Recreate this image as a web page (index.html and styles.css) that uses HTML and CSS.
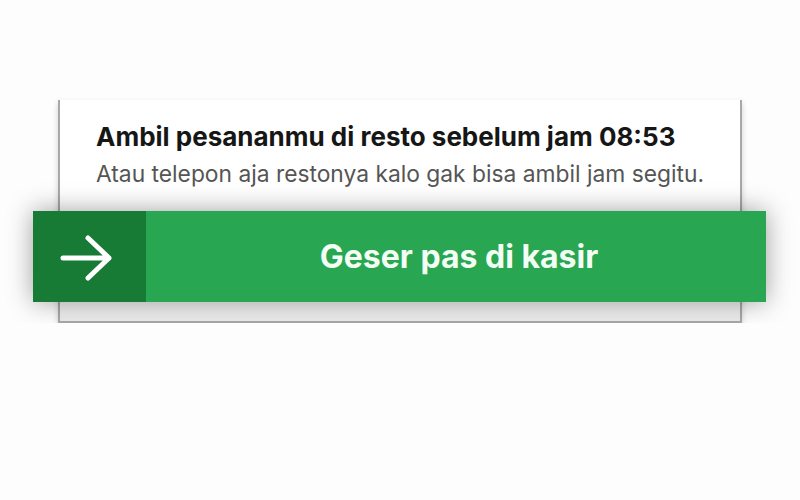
FILE: index.html
```html
<!DOCTYPE html>
<html lang="id">
<head>
    <meta charset="UTF-8">
    <meta name="viewport" content="width=device-width, initial-scale=1.0">
    <title>Geser pas di kasir</title>
    <link rel="stylesheet" href="styles.css">
</head>
<body>
    <div class="card">
        <div class="card-body">
            <div class="pickup-title">Ambil pesananmu di resto sebelum jam 08:53</div>
            <div class="pickup-note">Atau telepon aja restonya kalo gak bisa ambil jam segitu.</div>
        </div>
        <div class="slide-bar">
            <div class="slide-handle">
                <svg width="56" height="48" viewBox="0 0 56 48">
                    <path d="M4 25 H50 M29 5 L50 25 L29 45" fill="none" stroke="#fff" stroke-width="5" stroke-linecap="round" stroke-linejoin="round"/>
                </svg>
            </div>
            <div class="slide-label">Geser pas di kasir</div>
        </div>
        <div class="card-foot"></div>
    </div>
</body>
</html>
```

FILE: styles.css
```css
body {
    margin: 0;
    background-color: #fdfdfd;
    font-family: Inter, Roboto, 'Liberation Sans', sans-serif;
    color: #222;
}
.card {
    box-sizing: border-box;
    width: 684px;
    margin: 100px 0 0 58px;
    background-color: #fff;
    border-left: 2px solid #a8a8a8;
    border-right: 2px solid #a8a8a8;
    border-bottom: 2px solid #a8a8a8;
    box-shadow: 0 3px 6px rgba(0, 0, 0, 0.18);
}
.card-body {
    padding: 21px 0 0 36px;
    height: 90px;
}
.pickup-title {
    font-size: 26px;
    line-height: 32px;
    font-weight: 700;
    color: #161616;
}
.pickup-note {
    margin-top: 7px;
    font-size: 22.8px;
    line-height: 28px;
    color: #555;
}
.slide-bar {
    display: flex;
    height: 91px;
    margin: 0 -26px 0 -27px;
    background-color: #29a651;
    box-shadow: 0 0 24px rgba(0, 0, 0, 0.38);
    position: relative;
}
.slide-handle {
    width: 113px;
    padding-right: 6px;
    box-sizing: border-box;
    background-color: #177b35;
    display: flex;
    align-items: center;
    justify-content: center;
}
.slide-label {
    flex: 1;
    display: flex;
    align-items: center;
    justify-content: center;
    padding-left: 6px;
    font-size: 32px;
    font-weight: 700;
    color: #f3fff4;
}
.card-foot {
    height: 19px;
    background: linear-gradient(#f4f4f4, #ebebeb);
}
```
